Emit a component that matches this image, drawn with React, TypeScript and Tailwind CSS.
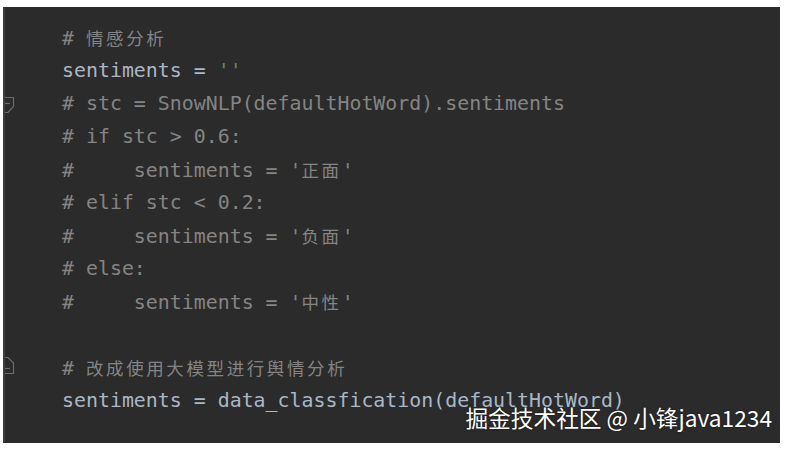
import React from "react";

type Seg = { t: string; c?: "code" | "cmt" | "str"; cjk?: boolean };

const color = {
  code: "text-[#a9b7c6]",
  cmt: "text-[#848484]",
  str: "text-[#6a8759]",
};

const lines: Seg[][] = [
  [{ t: "# ", c: "cmt" }, { t: "情感分析", c: "cmt", cjk: true }],
  [{ t: "sentiments = ", c: "code" }, { t: "''", c: "str" }],
  [{ t: "# stc = SnowNLP(defaultHotWord).sentiments", c: "cmt" }],
  [{ t: "# if stc > 0.6:", c: "cmt" }],
  [{ t: "#     sentiments = '", c: "cmt" }, { t: "正面", c: "cmt", cjk: true }, { t: "'", c: "cmt" }],
  [{ t: "# elif stc < 0.2:", c: "cmt" }],
  [{ t: "#     sentiments = '", c: "cmt" }, { t: "负面", c: "cmt", cjk: true }, { t: "'", c: "cmt" }],
  [{ t: "# else:", c: "cmt" }],
  [{ t: "#     sentiments = '", c: "cmt" }, { t: "中性", c: "cmt", cjk: true }, { t: "'", c: "cmt" }],
  [],
  [{ t: "# ", c: "cmt" }, { t: "改成使用大模型进行舆情分析", c: "cmt", cjk: true }],
  [{ t: "sentiments = data_classfication(defaultHotWord)", c: "code" }],
];

function FoldMarks() {
  return (
    <svg className="absolute left-[-5px] top-0" width="20" height="436" viewBox="0 0 20 436">
      <g fill="none" stroke="#6b6b6b" strokeWidth="1.2">
        {/* fold start */}
        <path d="M1 90.5 H13.5 V99.5 L8 105.5 H5" />
        <path d="M3 96.5 H10" />
        {/* fold end */}
        <path d="M5 350.5 H8 L13.5 356 V366.5 H1" />
        <path d="M3 361.5 H10" />
      </g>
    </svg>
  );
}

export default function App() {
  return (
    <div className="h-[449px] w-[787px] bg-white pl-[3px] pt-[7px]">
      <div className="relative h-[436px] w-[777px] overflow-hidden border-l-2 border-[#3d3d3d] bg-[#2b2b2b] pl-[57px] pt-[14px]">
        <FoldMarks />
        <div className="font-['DejaVu_Sans_Mono',monospace] text-[19.9px] leading-[33px] whitespace-pre">
          {lines.map((segs, i) => (
            <div key={i} className="h-[33px]">
              {segs.map((s, j) => (
                <span
                  key={j}
                  className={`${color[s.c ?? "code"]} ${
                    s.cjk ? "font-['Noto_Sans_CJK_SC',sans-serif] text-[17.5px] tracking-[2.6px]" : ""
                  }`}
                >
                  {s.t}
                </span>
              ))}
            </div>
          ))}
        </div>
        <div className="absolute right-[8px] top-[400px] font-['Noto_Sans_CJK_SC',sans-serif] text-[22.7px] leading-none text-white [text-shadow:0_0_2px_rgba(0,0,0,0.6)]">
          掘金技术社区 @ 小锋java1234
        </div>
      </div>
    </div>
  );
}
